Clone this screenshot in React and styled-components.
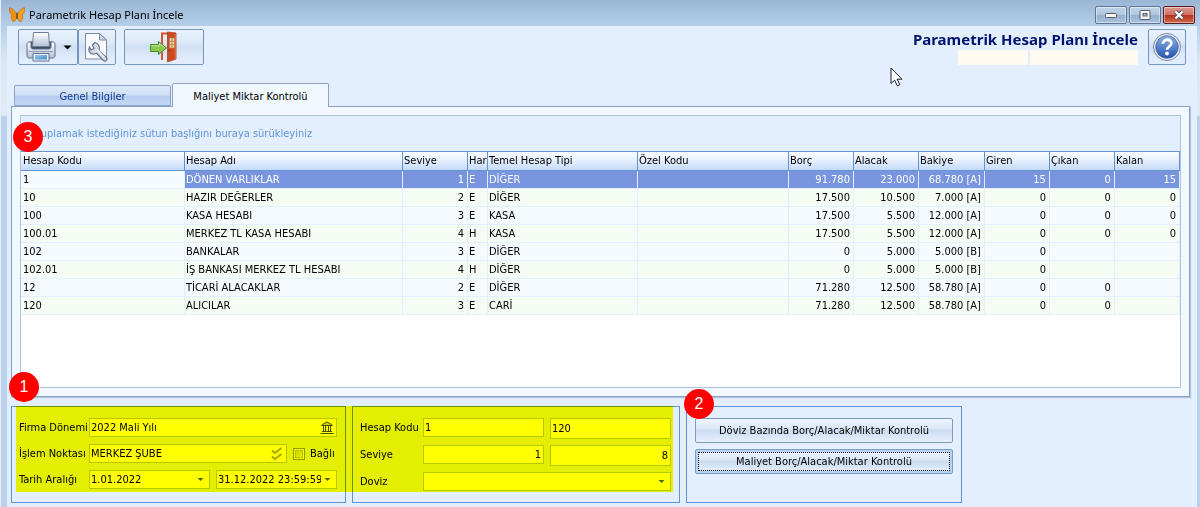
import React, { useState } from 'react';
import styled, { createGlobalStyle } from 'styled-components';

const GlobalStyle = createGlobalStyle`
  * {
    box-sizing: border-box;
  }

  body {
    margin: 0;
    background-color: #e3eeff;
    font-family: 'DejaVu Sans Condensed', 'DejaVu Sans', sans-serif;
    font-size: 11px;
    color: #000000;
  }

  button,
  input,
  select {
    font: inherit;
    color: inherit;
  }
`;

const Window = styled.div`
  min-height: 100vh;
  padding: 0 3px 0 6px;
  background: linear-gradient(to bottom, #9ab6d4 0, #b5cfe9 26px, #d9e6f4 60px, #e0ebf7 115px, #b9d1ea 117px, #b9d1ea 100%);
  border-left: 1px solid #e9eef5;
`;

const TitleBar = styled.header`
  height: 26px;
  display: flex;
  align-items: center;
  gap: 4px;
  padding: 3px 2px 0 2px;
`;

const WindowTitle = styled.span`
  flex: 1;
  font-family: 'Noto Sans', sans-serif;
  line-height: 16px;
`;

const WindowButtons = styled.div`
  display: flex;
  gap: 2px;
`;

const WindowButton = styled.button`
  width: 32px;
  height: 18px;
  padding: 0;
  display: flex;
  align-items: center;
  justify-content: center;
  border: 1px solid ${({ $close }) => ($close ? '#5a1c22' : '#5f7590')};
  border-radius: 2px;
  box-shadow: inset 0 0 0 1px rgba(255, 255, 255, 0.45);
  background: ${({ $close }) => ($close
    ? 'linear-gradient(to bottom, #dd9a90 0, #cf7267 48%, #b8311c 52%, #cf6a50 100%)'
    : 'linear-gradient(to bottom, #c3d4e6 0, #b0c6dd 48%, #94b0cd 52%, #a9c3dd 100%)')};
`;

const Client = styled.main`
  min-height: calc(100vh - 26px);
  padding: 3px 7px 4px 4px;
  background-color: #e3eeff;
`;

const Toolbar = styled.div`
  position: relative;
  display: flex;
  align-items: flex-start;
  padding: 0 4px 0 7px;
`;

const ToolButton = styled.button`
  width: ${({ $width }) => $width}px;
  height: 36px;
  padding: 0;
  margin-right: ${({ $gap }) => $gap || 0}px;
  display: flex;
  align-items: center;
  justify-content: center;
  gap: 6px;
  border: 1px solid #7696c0;
  border-radius: 2px;
  background: linear-gradient(to bottom, #e9f2fd 0, #dce9f8 35%, #cfdff2 50%, #dce9fa 75%, #e4effd 100%);
`;

const Heading = styled.div`
  margin-left: auto;
  margin-right: 10px;
`;

const HeadingText = styled.h1`
  margin: 0;
  font-family: 'Noto Sans', sans-serif;
  font-size: 15px;
  line-height: 21px;
  font-weight: bold;
  color: #00126e;
`;

const InfoFields = styled.div`
  display: flex;
  justify-content: flex-end;
  gap: 2px;
`;

const InfoField = styled.div`
  width: ${({ $width }) => $width}px;
  height: 15px;
  background-color: #fffaef;
`;

const Cursor = styled.svg`
  position: absolute;
  right: 287px;
  top: 38px;
`;

const Tabs = styled.div`
  display: flex;
  align-items: flex-end;
  margin-top: 18px;
  padding-left: 3px;
`;

const Tab = styled.button`
  position: relative;
  z-index: ${({ $active }) => ($active ? 1 : 0)};
  width: 157px;
  height: ${({ $active }) => ($active ? 24 : 21)}px;
  margin-bottom: ${({ $active }) => ($active ? -1 : 0)}px;
  padding: 2px 0 0;
  border: 1px solid #8ba3cb;
  border-bottom: ${({ $active }) => ($active ? 'none' : '1px solid #8ba3cb')};
  border-radius: 2px 2px 0 0;
  margin-right: 1px;
  color: ${({ $active }) => ($active ? '#000000' : '#123a8c')};
  background: ${({ $active }) => ($active
    ? '#f2f8ff'
    : 'linear-gradient(to bottom, #dfeafa 0, #cfdff5 48%, #b5cdef 54%, #c3d8f5 100%)')};
`;

const TabPage = styled.section`
  position: relative;
  padding: 8px;
  border: 1px solid #8ba0c3;
  background-color: #f2f8ff;
  box-shadow: 1px 1px 1px #b5c5de;
`;

const GridFrame = styled.div`
  height: 273px;
  border: 1px solid #adc4e0;
  background-color: #ffffff;
  overflow: auto;
`;

const GroupPanel = styled.div`
  height: 35px;
  padding: 10px 8px;
  line-height: 16px;
  color: #6096d4;
  background-color: #e3eeff;
`;

const Grid = styled.table`
  width: 100%;
  table-layout: fixed;
  border-collapse: separate;
  border-spacing: 0;
`;

const HeaderCell = styled.th`
  height: 20px;
  padding: 0 0 0 1px;
  border: solid #6394cf;
  border-width: 1px 1px 1px 0;
  font-weight: normal;
  line-height: 16px;
  text-align: left;
  white-space: nowrap;
  overflow: hidden;
  background: linear-gradient(to bottom, #fbfdff 0, #e4effd 50%, #c4dafa 100%);

  &:first-child {
    padding-left: 2px;
  }
`;

const Row = styled.tr`
  color: ${({ $selected }) => ($selected ? '#ffffff' : '#000000')};
  background-color: ${({ $selected }) => ($selected ? '#7a95df' : '#f5faff')};

  &:nth-child(even) {
    background-color: ${({ $selected }) => ($selected ? '#7a95df' : '#f5fcf4')};
  }
`;

const Cell = styled.td`
  height: 18px;
  padding: 0 3px 0 1px;
  border: solid #e3eeff;
  border-width: 0 1px 1px 0;
  line-height: 16px;
  text-align: ${({ $right }) => ($right ? 'right' : 'left')};
  white-space: nowrap;

  &:first-child {
    padding-left: 2px;
    color: #000000;
    background-color: ${({ $focused }) => ($focused ? '#f5faff' : 'transparent')};
  }
`;

const Badge = styled.span`
  position: absolute;
  left: ${({ $left }) => $left}px;
  top: ${({ $top }) => $top}px;
  z-index: 2;
  width: 30px;
  height: 30px;
  border-radius: 50%;
  background-color: #ff0000;
  color: #ffffff;
  font-family: 'Liberation Sans', sans-serif;
  font-size: 16px;
  line-height: 30px;
  text-align: center;
`;

const Panels = styled.div`
  display: flex;
  gap: 6px;
  margin-top: 9px;
`;

const Filters = styled.div`
  position: relative;
  display: flex;
  gap: 6px;
`;

const Highlight = styled.div`
  position: absolute;
  inset: 0 7px 11px 5px;
  background-color: #ffff00;
  mix-blend-mode: multiply;
  pointer-events: none;
`;

const Box = styled.div`
  position: relative;
  width: ${({ $width }) => $width}px;
  min-height: 97px;
  padding: 11px 8px;
  border: 1px solid #6394cf;
`;

const FilterBox = styled(Box)`
  padding-left: 7px;
`;

const FilterGrid = styled.div`
  display: grid;
  grid-template-columns: ${({ $label }) => $label}px minmax(0, 1fr);
  row-gap: ${({ $gap }) => $gap}px;
`;

const Label = styled.label`
  line-height: 19px;
  white-space: nowrap;
`;

const Fields = styled.div`
  display: flex;
  align-items: flex-start;
  gap: 6px;
`;

const Field = styled.div`
  flex: 1;
  min-width: 0;
  height: ${({ $tall }) => ($tall ? 21 : 19)}px;
  display: flex;
  align-items: center;
  padding: 0 2px 0 1px;
  border: 1px solid #b5c8e4;
  background-color: #ffffff;
`;

const Input = styled.input`
  flex: 1;
  min-width: 0;
  height: 100%;
  padding: 0;
  border: none;
  outline: none;
  background: transparent;
  text-align: ${({ $right }) => ($right ? 'right' : 'left')};
`;

const Select = styled.select`
  flex: 1;
  min-width: 0;
  height: 100%;
  padding: 0;
  border: none;
  outline: none;
  appearance: none;
  background: transparent;
`;

const IconButton = styled.button`
  flex: none;
  padding: 0 ${({ $pad }) => $pad || 0}px;
  display: flex;
  border: none;
  background: transparent;
`;

const CheckLabel = styled.label`
  width: 44px;
  height: 19px;
  display: flex;
  align-items: center;
  gap: 5px;
`;

const Checkbox = styled.input`
  appearance: none;
  flex: none;
  width: 12px;
  height: 12px;
  margin: 0;
  border: 1px solid #8e9aa8;
  background: linear-gradient(135deg, #c5cbd6, #f4f6f8);
  box-shadow: inset 0 0 0 1px #f4f4f4, inset 0 0 0 2px #bcc4d0;
`;

const ActionList = styled.div`
  display: flex;
  flex-direction: column;
  gap: 6px;
`;

const ActionButton = styled.button`
  height: 25px;
  padding: 2px;
  border: 1px solid #7f9bc2;
  border-radius: 2px;
  box-shadow: ${({ $focused }) => ($focused ? 'inset 0 0 0 2px #b4d3f5' : 'none')};
  background: linear-gradient(to bottom, #edf4fd 0, #dde9f7 40%, #ccdcf0 50%, #dbe8f8 80%, #e6f0fc 100%);
`;

const FocusRect = styled.span`
  display: block;
  line-height: 17px;
  border: 1px dotted ${({ $visible }) => ($visible ? '#000000' : 'transparent')};
`;

const Butterfly = () => (
  <svg width="16" height="16" viewBox="0 0 16 16">
    <path d="M7.700 8C7 5.500 4 1 .5.700c-.3 2.600.2 6 2.300 7-1.200 1.700-.4 5.300 1.500 7.300 2.100-.8 3.300-3.200 3.400-6z" fill="#f2920c" stroke="#a85508" strokeWidth=".5" />
    <path d="M8.300 8C9 5.500 12 1 15.500.700c.3 2.600-.2 6-2.300 7 1.200 1.700.4 5.300-1.500 7.300-2.100-.8-3.300-3.200-3.400-6z" fill="#f5a01a" stroke="#a85508" strokeWidth=".5" />
    <path d="M8 5.500V12" stroke="#4a2a14" strokeWidth="1" />
  </svg>
);

const PrinterIcon = () => (
  <svg width="32" height="32" viewBox="0 0 32 32">
    <defs>
      <linearGradient id="printerBody" x1="0" y1="0" x2="0" y2="1">
        <stop offset="0" stopColor="#ffffff" />
        <stop offset="1" stopColor="#b3c0d6" />
      </linearGradient>
      <linearGradient id="printerPaper" x1="0" y1="0" x2="1" y2="1">
        <stop offset="0" stopColor="#9cc9ee" />
        <stop offset="1" stopColor="#3f8bd0" />
      </linearGradient>
    </defs>
    <path d="M5 11h22l1 8H4z" fill="#3d4b63" stroke="#35435b" />
    <path d="M2 13c0-1 1-2 2-2h2v5c0 1 1 2 2 2h16c1 0 2-1 2-2v-5h2c1 0 2 1 2 2v12c0 1-1 2-2 2H4c-1 0-2-1-2-2z" fill="url(#printerBody)" stroke="#5f6f8c" />
    <path d="M8.500 1.500h15l1 14h-17z" fill="url(#printerBody)" stroke="#6e7d99" />
    <path d="M4 20.500h24" stroke="#8d9ab3" />
    <path d="M8 22.500h16v7.500H8z" fill="#eef3fa" stroke="#60708e" />
    <path d="M10 24h12v4.500H10z" fill="url(#printerPaper)" />
  </svg>
);

const PageSetupIcon = () => (
  <svg width="28" height="32" viewBox="0 0 28 32">
    <path d="M2.500 2.500h14l7 6.500v19h-21z" fill="#f8fafd" stroke="#7d8aa6" />
    <path d="M16.500 2.500V9h7z" fill="#cfd9e8" stroke="#7d8aa6" />
    <path d="M12 11.500l-2.500 2.500 1.500 3.500-3 1.500-1.500-3c-1.500 2.500-.5 6.500 3.500 7 1.500.2 2.500-.2 3.500-.7l7 7.200c2 1.600 4.700-1 3-3l-7.500-6.500c1.500-3.500-.5-7.700-4-8.500z" fill="#d5dbe6" stroke="#64718c" strokeWidth="1.200" />
    <path d="M14 18.500l7.500 8" stroke="#ffffff" strokeWidth="1.300" />
  </svg>
);

const ExitIcon = () => (
  <svg width="36" height="32" viewBox="0 0 36 32">
    <path d="M16 29V2.500h6" fill="none" stroke="#d8532f" strokeWidth="2" />
    <path d="M21.500 1l8.500 1v26l-8.500 3z" fill="#cb4a22" stroke="#b23d1b" strokeWidth=".8" />
    <path d="M29.200 3v25" stroke="#e5794f" />
    <path d="M23.500 7h5v10h-5z" fill="#e9dfae" stroke="#c8703f" strokeWidth=".6" />
    <path d="M26 7v10M23.500 10.300h5M23.500 13.700h5" stroke="#b86b42" strokeWidth=".8" />
    <circle cx="23.500" cy="19.500" r=".8" fill="#7c230c" />
    <path d="M4.500 13.500h8V10.500l8 6.500-8 6.500v-3h-8z" fill="#8cc84b" stroke="#4b8a2b" />
    <path d="M5.500 14.700h8v-2.200l5 4" fill="none" stroke="#c5e79a" />
  </svg>
);

const HelpIcon = () => (
  <svg width="30" height="30" viewBox="0 0 30 30">
    <defs>
      <linearGradient id="helpFill" x1="0" y1="0" x2="0" y2="1">
        <stop offset="0" stopColor="#8fb2e6" />
        <stop offset="1" stopColor="#2453b0" />
      </linearGradient>
    </defs>
    <circle cx="15" cy="15" r="13.500" fill="#eef2f8" stroke="#7686a3" />
    <circle cx="15" cy="15" r="11.300" fill="url(#helpFill)" stroke="#3d5f9e" strokeWidth=".8" />
    <path d="M11 11.800c0-5.300 8.300-5.300 8.300-.5 0 3.200-4.200 3.200-4.200 6.500" fill="none" stroke="#ffffff" strokeWidth="2.800" />
    <circle cx="15" cy="21.500" r="1.900" fill="#ffffff" />
  </svg>
);

const Arrow = ({ width = 9, color = '#4c6a8c' }) => (
  <svg width={width} height="5" viewBox="0 0 9 5">
    <path d="M1.500 1h6l-3 3z" fill={color} />
  </svg>
);

const DropArrow = () => (
  <svg width="9" height="5" viewBox="0 0 9 5">
    <path d="M.5.500h8l-4 4z" fill="#000000" />
  </svg>
);

const BankIcon = () => (
  <svg width="14" height="13" viewBox="0 0 14 13" fill="none" stroke="#44536a">
    <path d="M1.500 4.500 4 2.500l3-1.500 3 1.500 2.500 2z" fill="#c9d2de" />
    <path d="M3.500 5v5M5.500 5v5M8.500 5v5M10.500 5v5M2 10.500h10M.5 12.500h13" />
  </svg>
);

const ChevronsIcon = () => (
  <svg width="12" height="14" viewBox="0 0 12 14" fill="none" stroke="#a3adba" strokeWidth="2">
    <path d="M1 3.500 4 6l6.500-5" />
    <path d="M1 9.500 4 12l6.500-5" />
  </svg>
);

const columns = [
  { title: 'Hesap Kodu', width: 164 },
  { title: 'Hesap Adı', width: 218 },
  { title: 'Seviye', width: 65, right: true },
  { title: 'Har', width: 20 },
  { title: 'Temel Hesap Tipi', width: 150 },
  { title: 'Özel Kodu', width: 151 },
  { title: 'Borç', width: 65, right: true },
  { title: 'Alacak', width: 65, right: true },
  { title: 'Bakiye', width: 66, right: true },
  { title: 'Giren', width: 65, right: true },
  { title: 'Çıkan', width: 65, right: true },
  { title: 'Kalan', width: 65, right: true },
];

const rows = [
  ['1', 'DÖNEN VARLIKLAR', '1', 'E', 'DİĞER', '', '91.780', '23.000', '68.780 [A]', '15', '0', '15'],
  ['10', 'HAZIR DEĞERLER', '2', 'E', 'DİĞER', '', '17.500', '10.500', '7.000 [A]', '0', '0', '0'],
  ['100', 'KASA HESABI', '3', 'E', 'KASA', '', '17.500', '5.500', '12.000 [A]', '0', '0', '0'],
  ['100.01', 'MERKEZ TL KASA HESABI', '4', 'H', 'KASA', '', '17.500', '5.500', '12.000 [A]', '0', '0', '0'],
  ['102', 'BANKALAR', '3', 'E', 'DİĞER', '', '0', '5.000', '5.000 [B]', '0', '', ''],
  ['102.01', 'İŞ BANKASI MERKEZ TL HESABI', '4', 'H', 'DİĞER', '', '0', '5.000', '5.000 [B]', '0', '', ''],
  ['12', 'TİCARİ ALACAKLAR', '2', 'E', 'DİĞER', '', '71.280', '12.500', '58.780 [A]', '0', '0', ''],
  ['120', 'ALICILAR', '3', 'E', 'CARİ', '', '71.280', '12.500', '58.780 [A]', '0', '0', ''],
];

const totalWidth = columns.reduce((sum, column) => sum + column.width, 0);

const AccountGrid = () => {
  const [selected, setSelected] = useState(0);

  return (
    <Grid>
      <colgroup>
        {columns.map((column) => (
          <col key={column.title} style={{ width: `${(column.width / totalWidth) * 100}%` }} />
        ))}
      </colgroup>
      <thead>
        <tr>
          {columns.map((column) => <HeaderCell key={column.title}>{column.title}</HeaderCell>)}
        </tr>
      </thead>
      <tbody>
        {rows.map((row, index) => (
          <Row key={row[0]} $selected={index === selected} onClick={() => setSelected(index)}>
            {row.map((value, i) => (
              <Cell key={columns[i].title} $right={columns[i].right} $focused={index === selected}>{value}</Cell>
            ))}
          </Row>
        ))}
      </tbody>
    </Grid>
  );
};

const App = () => {
  const [tab, setTab] = useState('maliyet');

  return (
    <Window>
      <GlobalStyle />
      <TitleBar>
        <Butterfly />
        <WindowTitle>Parametrik Hesap Planı İncele</WindowTitle>
        <WindowButtons>
          <WindowButton aria-label="Simge durumuna küçült">
            <svg width="12" height="6"><rect x=".5" y="1.500" width="11" height="4" rx="1" fill="#f5f5f5" stroke="#545c68" /></svg>
          </WindowButton>
          <WindowButton aria-label="Ekranı kapla">
            <svg width="12" height="10">
              <rect x="1" y=".5" width="10" height="9" rx="1" fill="#f5f5f5" stroke="#545c68" />
              <rect x="4" y="3.500" width="4" height="2.500" fill="#a9bed5" stroke="#545c68" />
            </svg>
          </WindowButton>
          <WindowButton $close aria-label="Kapat">
            <svg width="12" height="10" viewBox="0 0 12 10">
              <path d="M2.500 1.500l7 7M9.500 1.500l-7 7" stroke="#4b4f5c" strokeWidth="4" />
              <path d="M2.500 1.500l7 7M9.500 1.500l-7 7" stroke="#ffffff" strokeWidth="2.300" />
            </svg>
          </WindowButton>
        </WindowButtons>
      </TitleBar>
      <Client>
        <Toolbar>
          <ToolButton $width={60} aria-label="Yazdır">
            <PrinterIcon />
            <DropArrow />
          </ToolButton>
          <ToolButton $width={38} $gap={8} aria-label="Sayfa ayarları"><PageSetupIcon /></ToolButton>
          <ToolButton $width={80} aria-label="Çıkış"><ExitIcon /></ToolButton>
          <Heading>
            <HeadingText>Parametrik Hesap Planı İncele</HeadingText>
            <InfoFields>
              <InfoField $width={70} />
              <InfoField $width={108} />
            </InfoFields>
          </Heading>
          <ToolButton $width={38} aria-label="Yardım"><HelpIcon /></ToolButton>
          <Cursor width="13" height="20" viewBox="0 0 13 20">
            <path d="M1 1v15.500l3.600-3.400 2.700 5.700 2.500-1.200-2.700-5.400H12z" fill="#ffffff" stroke="#1c1c28" />
          </Cursor>
        </Toolbar>
        <Tabs role="tablist">
          <Tab role="tab" $active={tab === 'genel'} onClick={() => setTab('genel')}>Genel Bilgiler</Tab>
          <Tab role="tab" $active={tab === 'maliyet'} onClick={() => setTab('maliyet')}>Maliyet Miktar Kontrolü</Tab>
        </Tabs>
        <TabPage>
          <GridFrame>
            <GroupPanel>Gruplamak istediğiniz sütun başlığını buraya sürükleyiniz</GroupPanel>
            <AccountGrid />
          </GridFrame>
          <Badge $left={1} $top={15}>3</Badge>
        </TabPage>
        <Panels>
          <Filters>
            <FilterBox $width={335}>
              <FilterGrid $label={70} $gap={7}>
                <Label htmlFor="firma">Firma Dönemi</Label>
                <Field>
                  <Input id="firma" defaultValue="2022 Mali Yılı" />
                  <IconButton aria-label="Firma seç"><BankIcon /></IconButton>
                </Field>
                <Label htmlFor="islem">İşlem Noktası</Label>
                <Fields>
                  <Field>
                    <Input id="islem" defaultValue="MERKEZ ŞUBE" />
                    <IconButton $pad={1} aria-label="Şube seç"><ChevronsIcon /></IconButton>
                  </Field>
                  <CheckLabel>
                    <Checkbox type="checkbox" />
                    Bağlı
                  </CheckLabel>
                </Fields>
                <Label htmlFor="tarih">Tarih Aralığı</Label>
                <Fields>
                  <Field>
                    <Input id="tarih" defaultValue="1.01.2022" />
                    <IconButton $pad={2} aria-label="Başlangıç tarihi"><Arrow /></IconButton>
                  </Field>
                  <Field>
                    <Input aria-label="Bitiş tarihi" defaultValue="31.12.2022 23:59:59" />
                    <IconButton $pad={2} aria-label="Bitiş tarihi seç"><Arrow /></IconButton>
                  </Field>
                </Fields>
              </FilterGrid>
            </FilterBox>
            <FilterBox $width={328}>
              <FilterGrid $label={63} $gap={6}>
                <Label htmlFor="hesap">Hesap Kodu</Label>
                <Fields>
                  <Field><Input id="hesap" defaultValue="1" /></Field>
                  <Field $tall><Input aria-label="Hesap kodu bitiş" defaultValue="120" /></Field>
                </Fields>
                <Label htmlFor="seviye">Seviye</Label>
                <Fields>
                  <Field><Input id="seviye" $right defaultValue="1" /></Field>
                  <Field $tall><Input aria-label="Seviye bitiş" $right defaultValue="8" /></Field>
                </Fields>
                <Label htmlFor="doviz">Doviz</Label>
                <Field>
                  <Select id="doviz" defaultValue=""><option value="" /></Select>
                  <Arrow width={13} />
                </Field>
              </FilterGrid>
            </FilterBox>
            <Highlight />
            <Badge $left={-2} $top={-34}>1</Badge>
          </Filters>
          <Box $width={276}>
            <ActionList>
              <ActionButton><FocusRect>Döviz Bazında Borç/Alacak/Miktar Kontrolü</FocusRect></ActionButton>
              <ActionButton $focused><FocusRect $visible>Maliyet Borç/Alacak/Miktar Kontrolü</FocusRect></ActionButton>
            </ActionList>
            <Badge $left={-3} $top={-18}>2</Badge>
          </Box>
        </Panels>
      </Client>
    </Window>
  );
};

export default App;
